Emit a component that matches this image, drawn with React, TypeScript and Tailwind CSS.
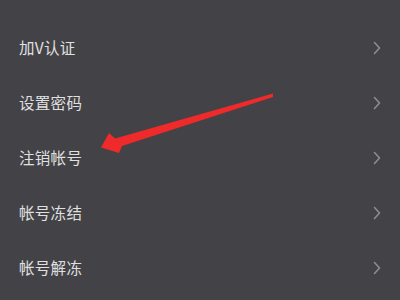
const items = ["加V认证", "设置密码", "注销帐号", "帐号冻结", "帐号解冻"];

function Chevron() {
  return (
    <svg width="8" height="14" viewBox="0 0 8 14" fill="none">
      <path d="M1.5 1.5L6.5 7L1.5 12.5" stroke="#8d8c91" strokeWidth="1.6" strokeLinecap="round" strokeLinejoin="round" />
    </svg>
  );
}

export default function App() {
  return (
    <div
      className="relative w-[400px] h-[300px] overflow-hidden bg-[#434247] pt-[20px]"
      style={{ fontFamily: '"Noto Sans CJK SC", "Noto Sans", sans-serif' }}
    >
      <ul>
        {items.map((label) => (
          <li key={label} className="flex h-[55px] items-center justify-between pl-[19px] pr-[19px]">
            <span className="text-[15.5px] tracking-[0.3px] text-[#e0e0e0]">{label}</span>
            <Chevron />
          </li>
        ))}
      </ul>
      <svg className="absolute left-0 top-0" width="400" height="300" viewBox="0 0 400 300">
        <polygon
          points="273,93.5 115,138.5 109,133 101,147.5 119,153 122,146 273,97"
          fill="#ee2a2a"
        />
      </svg>
    </div>
  );
}
